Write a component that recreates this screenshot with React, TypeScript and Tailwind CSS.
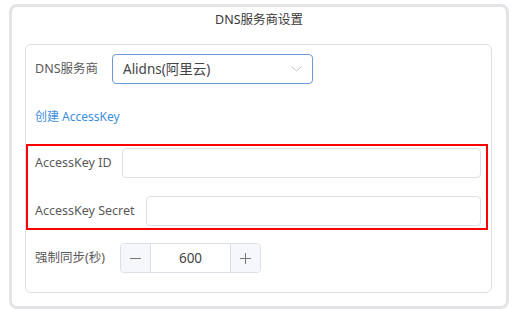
import { useState } from "react";

const font = { fontFamily: '"Noto Sans", "Noto Sans CJK SC", sans-serif' };

function Chevron() {
  return (
    <svg width="11" height="6" viewBox="0 0 11 6" fill="none">
      <path d="M0.5 0.5 L5.5 5 L10.5 0.5" stroke="#c0c4cc" strokeWidth="1" />
    </svg>
  );
}

export default function App() {
  const [seconds, setSeconds] = useState(600);
  const [keyId, setKeyId] = useState("");
  const [keySecret, setKeySecret] = useState("");

  return (
    <div className="w-[529px] h-[323px] bg-white pt-[4px] pl-[9px]" style={font}>
      {/* outer panel */}
      <div className="w-[500px] h-[305px] border-[3px] border-[#e2e4e8] rounded-[8px] flex flex-col">
        <div className="h-[26px] pt-[3px] text-center text-[12.5px] leading-[20px] text-[#3a3a3a]">
          DNS服务商设置
        </div>

        {/* inner panel */}
        <div className="ml-[13px] mt-[11px] w-[467px] h-[249px] border border-[#dcdfe6] rounded-[6px] pt-[9px] flex flex-col">
          {/* provider */}
          <div className="flex items-center h-[30px] pl-[9px]">
            <span className="w-[77px] text-[12.5px] text-[#5a5a5a]">DNS服务商</span>
            <div className="w-[201px] h-[30px] border border-[#6c9bd6] rounded-[4px] flex items-center justify-between pl-[10px] pr-[10px]">
              <span className="text-[13.5px] text-[#444]">Alidns(阿里云)</span>
              <Chevron />
            </div>
          </div>

          <div className="mt-[23px] h-[20px] pl-[9px] text-[12px] leading-[20px] text-[#3d8ee0]">
            创建 AccessKey
          </div>

          {/* highlighted keys */}
          <div className="mt-[17px] w-[462px] h-[86px] border-2 border-[#ff0000] pt-[2px] pr-[5px] flex flex-col">
            <div className="flex items-center h-[30px] pl-[7px]">
              <span className="w-[87px] text-[12.5px] text-[#5a5a5a]">AccessKey ID</span>
              <input
                value={keyId}
                onChange={(e) => setKeyId(e.target.value)}
                className="flex-1 h-[30px] border border-[#dcdfe6] rounded-[4px] outline-none px-2 text-[13px]"
              />
            </div>
            <div className="flex items-center h-[30px] pl-[7px] mt-[18px]">
              <span className="w-[111px] text-[12.5px] text-[#5a5a5a]">AccessKey Secret</span>
              <input
                value={keySecret}
                onChange={(e) => setKeySecret(e.target.value)}
                className="flex-1 h-[30px] border border-[#dcdfe6] rounded-[4px] outline-none px-2 text-[13px]"
              />
            </div>
          </div>

          {/* sync interval */}
          <div className="flex items-center h-[30px] pl-[9px] mt-[13px]">
            <span className="w-[85px] text-[12.5px] text-[#5a5a5a]">强制同步(秒)</span>
            <div className="w-[141px] h-[30px] border border-[#dcdfe6] rounded-[4px] flex overflow-hidden">
              <button
                onClick={() => setSeconds((s) => s - 1)}
                className="w-[30px] h-full bg-[#f5f7fa] border-r border-[#dcdfe6] flex items-center justify-center"
              >
                <span className="block w-[11px] h-px bg-[#777]" />
              </button>
              <div className="flex-1 flex items-center justify-center text-[13.5px] text-[#444]">{seconds}</div>
              <button
                onClick={() => setSeconds((s) => s + 1)}
                className="w-[30px] h-full bg-[#f5f7fa] border-l border-[#dcdfe6] flex items-center justify-center relative"
              >
                <span className="block w-[11px] h-px bg-[#777]" />
                <span className="absolute block w-px h-[11px] bg-[#777]" />
              </button>
            </div>
          </div>
        </div>
      </div>
    </div>
  );
}
